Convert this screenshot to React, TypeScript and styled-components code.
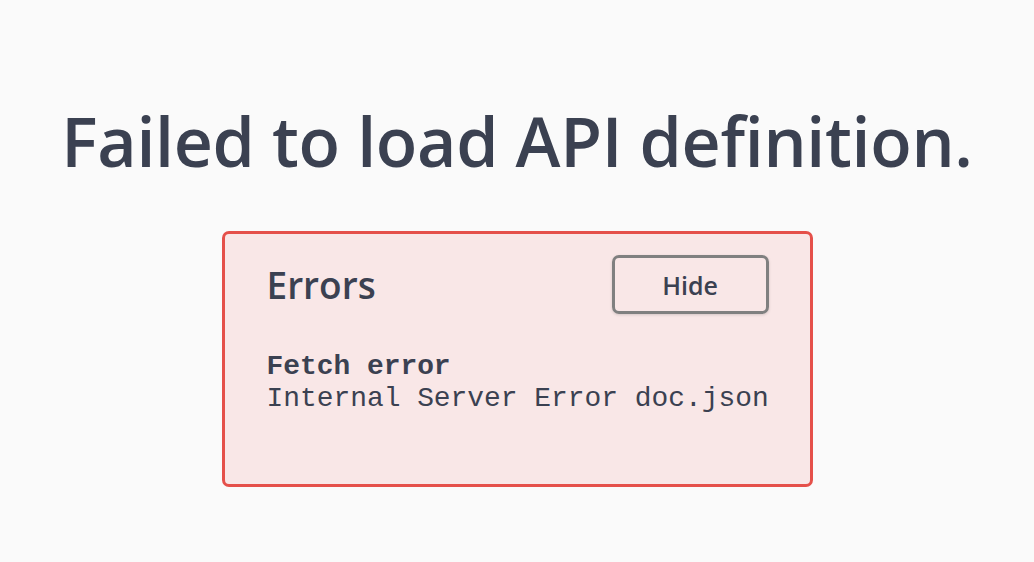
import React from "react";
import styled, { createGlobalStyle } from "styled-components";

const Global = createGlobalStyle`
  html, body { margin: 0; padding: 0; background: #fafafa; }
  body { font-family: "Open Sans", "Noto Sans", sans-serif; color: #3b4151; }
`;

const Page = styled.div`
  display: flex;
  flex-direction: column;
  align-items: center;
  padding-top: 96px;
`;

const Title = styled.h1`
  margin: 0;
  font-size: 68px;
  font-weight: 600;
  line-height: 90px;
  color: #3b4151;
  letter-spacing: -0.3px;
`;

const ErrorBox = styled.div`
  margin-top: 45px;
  width: 585px;
  height: 250px;
  box-sizing: content-box;
  border: 3px solid #e5504a;
  border-radius: 7px;
  background: #f9e7e7;
`;

const Inner = styled.div`
  padding: 21px 41px 0 42px;
`;

const Header = styled.div`
  display: flex;
  align-items: center;
  justify-content: space-between;
`;

const ErrorsTitle = styled.h4`
  margin: 0;
  font-size: 37px;
  font-weight: 600;
  line-height: 52px;
  color: #3b4151;
`;

const HideButton = styled.button`
  width: 157px;
  height: 59px;
  box-sizing: border-box;
  border: 3px solid #808080;
  border-radius: 7px;
  background: transparent;
  font-family: "Open Sans", "Noto Sans", sans-serif;
  font-size: 25px;
  font-weight: 600;
  color: #3b4151;
  box-shadow: 0 1px 3px rgba(0, 0, 0, 0.15);
  cursor: pointer;
`;

const ErrorBody = styled.div`
  margin-top: 37px;
  font-family: "Liberation Mono", "Courier New", monospace;
  font-size: 27.9px;
  line-height: 32px;
  color: #3b4151;
  white-space: nowrap;
`;

const ErrorName = styled.div`
  font-weight: 700;
`;

export default function App() {
  return (
    <>
      <Global />
      <Page>
        <Title>Failed to load API definition.</Title>
        <ErrorBox>
          <Inner>
            <Header>
              <ErrorsTitle>Errors</ErrorsTitle>
              <HideButton>Hide</HideButton>
            </Header>
            <ErrorBody>
              <ErrorName>Fetch error</ErrorName>
              <div>Internal Server Error doc.json</div>
            </ErrorBody>
          </Inner>
        </ErrorBox>
      </Page>
    </>
  );
}
